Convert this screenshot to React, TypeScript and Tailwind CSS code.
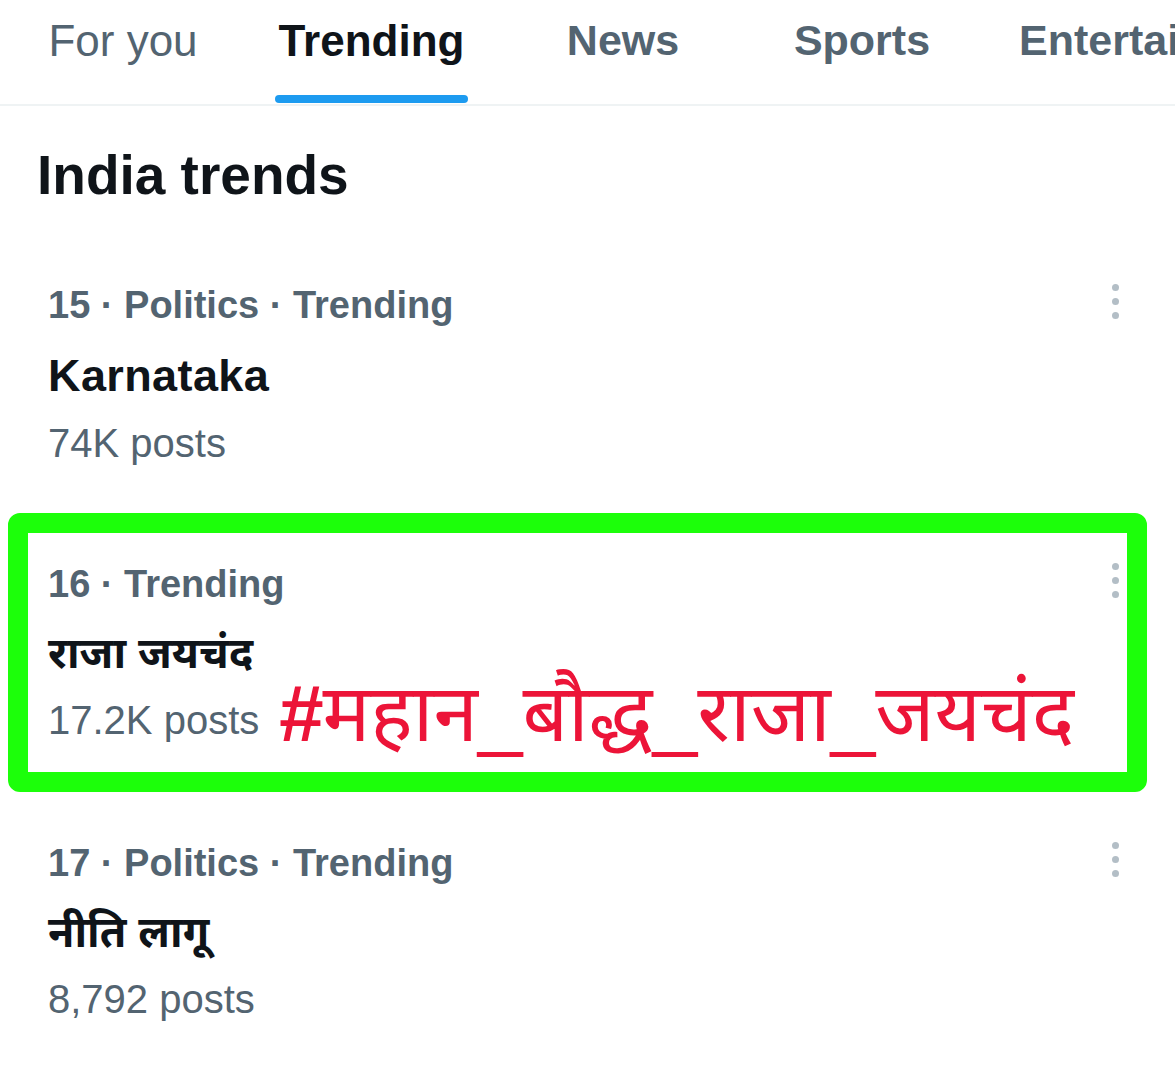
import React from "react"

const sans = '"Liberation Sans", "Noto Sans Devanagari", "Lohit Devanagari", "FreeSans", "Noto Sans", sans-serif'

type Trend = {
  rank: number
  category?: string
  name: string
  posts: string
  hindi?: boolean
}

const trends: Trend[] = [
  { rank: 15, category: "Politics", name: "Karnataka", posts: "74K posts" },
  { rank: 16, name: "राजा जयचंद", posts: "17.2K posts", hindi: true },
  { rank: 17, category: "Politics", name: "नीति लागू", posts: "8,792 posts", hindi: true },
]

const tabs = [
  { label: "For you", box: "w-[246px] justify-center", weight: "font-normal text-[44px]" },
  { label: "Trending", box: "w-[251px] justify-center", weight: "font-bold text-[44px]", active: true },
  { label: "News", box: "w-[252px] justify-center", weight: "font-bold text-[43px]" },
  { label: "Sports", box: "w-[226px] justify-center", weight: "font-bold text-[43px]" },
  { label: "Entertainment", box: "w-[300px] justify-start pl-[44px]", weight: "font-bold text-[43px]" },
]

const MoreDots = () => (
  <div className="mt-[-2px] flex w-[7px] shrink-0 flex-col gap-[7px]">
    <span className="block size-[7px] rounded-full bg-[#b3bec6]" />
    <span className="block size-[7px] rounded-full bg-[#b3bec6]" />
    <span className="block size-[7px] rounded-full bg-[#b3bec6]" />
  </div>
)

const TrendRow = ({ trend, highlighted }: { trend: Trend; highlighted?: boolean }) => {
  const meta = [String(trend.rank), trend.category, "Trending"].filter(Boolean).join(" · ")
  return (
    <div className="relative flex h-[279px] items-start justify-between pl-[48px] pr-[56px] pt-[22px]">
      <div className="flex flex-col">
        <p className="text-[38px] font-bold leading-none text-[#536471]">{meta}</p>
        <p
          className={`mt-[29px] font-bold leading-none text-[#0f1419] ${
            trend.hindi ? "text-[43px]" : "text-[45px] tracking-[0.4px]"
          }`}
        >
          {trend.name}
        </p>
        <p className="mt-[25px] text-[40px] leading-none text-[#536471]">{trend.posts}</p>
      </div>
      <MoreDots />

      {highlighted && (
        <>
          {/* annotation drawn over the screenshot */}
          <div className="pointer-events-none absolute bottom-[30px] left-[8px] right-[28px] top-[-30px] rounded-[12px] border-[20px] border-[#1cff0a]" />
          <p className="absolute left-[278px] top-[131px] whitespace-nowrap text-[80px] leading-none text-[#ec1438]">
            <span className="font-bold italic">#</span>महान_बौद्ध_राजा_जयचंद
          </p>
        </>
      )}
    </div>
  )
}

export default function App() {
  return (
    <div className="h-[1080px] w-[1175px] overflow-hidden bg-white" style={{ fontFamily: sans }}>
      {/* Tabs */}
      <div className="flex h-[106px] border-b-2 border-[#eff3f4]">
        {tabs.map((tab) => (
          <div key={tab.label} className={`${tab.box} flex shrink-0 pt-[19px]`}>
            <div className="flex flex-col items-stretch">
              <span
                className={`whitespace-nowrap leading-none ${tab.weight} ${
                  tab.active ? "text-[#0f1419]" : "text-[#536471]"
                }`}
              >
                {tab.label}
              </span>
              {tab.active && <span className="mx-[-4px] mt-[32px] h-[8px] rounded-full bg-[#1d9bf0]" />}
            </div>
          </div>
        ))}
      </div>

      {/* Heading */}
      <h2 className="pl-[37px] pt-[42px] text-[55px] font-bold leading-none text-[#0f1419]">India trends</h2>

      <div className="mt-[61px]">
        {trends.map((t) => (
          <TrendRow key={t.rank} trend={t} highlighted={t.rank === 16} />
        ))}
      </div>
    </div>
  )
}
